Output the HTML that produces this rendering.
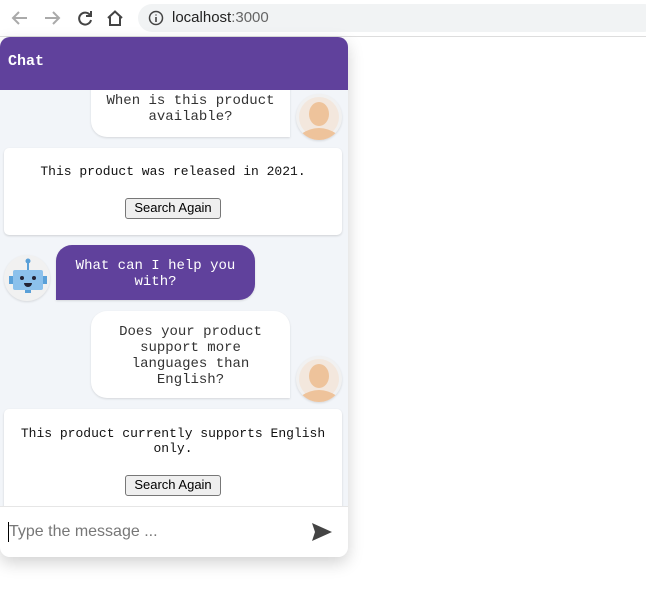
<html><head><style>
body{margin:0;width:646px;height:596px;background:#fff;position:relative;overflow:hidden;font-family:"Liberation Sans",sans-serif}
.a{position:absolute}
.m{font-family:"Liberation Mono",monospace}
.bub{position:absolute;background:#fff;text-align:center;font-size:14px;line-height:16px;color:#333;box-shadow:0 1px 2px rgba(0,0,0,.12)}
.av{position:absolute;width:46px;height:46px;border-radius:50%;background:#f1f1f1;box-shadow:0 1px 2px rgba(0,0,0,.12);overflow:hidden}
.card{position:absolute;left:4px;width:338px;background:#fff;border-radius:5px;box-shadow:0 1px 2px rgba(0,0,0,.15);text-align:center;font-size:13px;line-height:15px;color:#111}
.btn{position:absolute;left:121px;width:94px;height:19px;border:1px solid #777;border-radius:3px;background:#efefef;font-size:13px;line-height:18px;text-align:center;font-family:"Liberation Sans",sans-serif;color:#000}
</style></head><body>
<svg class="a" style="left:10px;top:9px" width="120" height="18" viewBox="0 0 120 18" fill="none" stroke-width="2">
<path d="M17 9H3M9 3L3 9l6 6" stroke="#aaa"/>
<path d="M35 9h14M43 3l6 6-6 6" stroke="#aaa"/>
<path d="M80 6a6 6 0 1 0 1 5" stroke="#444"/><path d="M81 2v5h-5" stroke="#444"/>
<path d="M98 9l7-6.5 7 6.5M100 8v8h10V8" stroke="#444"/>
</svg>
<div class="a" style="left:138px;top:4px;width:520px;height:28px;border-radius:14px;background:#f1f3f4"></div>
<svg class="a" style="left:148px;top:10px" width="16" height="16"><circle cx="8" cy="8" r="6.5" fill="none" stroke="#444" stroke-width="1.5"/><path d="M8 7v5M8 4.5v1" stroke="#444" stroke-width="1.6"/></svg>
<div class="a" style="left:172px;top:9px;font-size:15px;color:#222">localhost<span style="color:#666">:3000</span></div>
<div class="a" style="left:0;top:36px;width:646px;height:1px;background:#ddd"></div>

<div class="a" style="left:0;top:37px;width:348px;height:520px;border-radius:10px;background:#f2f5f9;box-shadow:0 6px 16px rgba(0,0,0,.18);overflow:hidden">
 <div class="a m" style="left:0;top:0;width:348px;height:53px;background:#60419c;color:#fff;font-weight:bold;font-size:15px;line-height:50px;padding-left:8px;box-sizing:border-box">Chat</div>
 <div class="a" style="left:0;top:53px;width:348px;height:416px;overflow:hidden">
  <div class="bub m" style="left:91px;top:-10px;width:199px;height:57px;border-radius:0 0 0 16px;padding-top:13px;box-sizing:border-box">When is this product<br>available?</div>
  <div class="av" style="left:296px;top:4px"><svg width="46" height="46"><circle cx="23" cy="23" r="20" fill="#f3e7dd"/><ellipse cx="23" cy="20" rx="10" ry="12" fill="#eec39b"/><path d="M5 40q18-12 36 0v6H5z" fill="#eec39b"/></svg></div>
  <div class="card m" style="top:58px;height:87px"><div style="padding-top:16px">This product was released in 2021.</div><div class="btn" style="top:50px">Search Again</div></div>
  <div class="av" style="left:4px;top:165px"><svg width="46" height="46"><rect x="9" y="15" width="30" height="20" rx="2" fill="#8cc1ec"/><rect x="5" y="21" width="4" height="8" fill="#5aa0d8"/><rect x="39" y="21" width="4" height="8" fill="#5aa0d8"/><path d="M24 15V7" stroke="#5aa0d8" stroke-width="2"/><circle cx="24" cy="6" r="2.5" fill="#5aa0d8"/><circle cx="18" cy="23" r="2" fill="#223"/><circle cx="30" cy="23" r="2" fill="#223"/><path d="M20 28h8a4 4 0 0 1-8 0z" fill="#223"/><rect x="21" y="35" width="6" height="3" fill="#5aa0d8"/></svg></div>
  <div class="bub m" style="left:56px;top:155px;width:199px;height:55px;border-radius:16px 16px 16px 0;background:#60419c;color:#fff;padding-top:13px;box-sizing:border-box">What can I help you<br>with?</div>
  <div class="bub m" style="left:91px;top:221px;width:199px;height:87px;border-radius:16px 16px 0 16px;padding-top:13px;box-sizing:border-box">Does your product<br>support more<br>languages than<br>English?</div>
  <div class="av" style="left:296px;top:266px"><svg width="46" height="46"><circle cx="23" cy="23" r="20" fill="#f3e7dd"/><ellipse cx="23" cy="20" rx="10" ry="12" fill="#eec39b"/><path d="M5 40q18-12 36 0v6H5z" fill="#eec39b"/></svg></div>
  <div class="card m" style="top:319px;height:110px"><div style="padding-top:17px">This product currently supports English<br>only.</div><div class="btn" style="top:66px">Search Again</div></div>
 </div>
 <div class="a" style="left:0;top:469px;width:348px;height:51px;background:#fff;border-top:1px solid #e6e6e6">
  <div class="a" style="left:8px;top:15px;width:1px;height:20px;background:#000"></div>
  <div class="a" style="left:9px;top:16px;font-size:16px;color:#777">Type the message ...</div>
  <svg class="a" style="left:311px;top:15px" width="22" height="20"><path d="M1 1L21 10 1 19l3-9z" fill="#444"/></svg>
 </div>
</div>
</body></html>
